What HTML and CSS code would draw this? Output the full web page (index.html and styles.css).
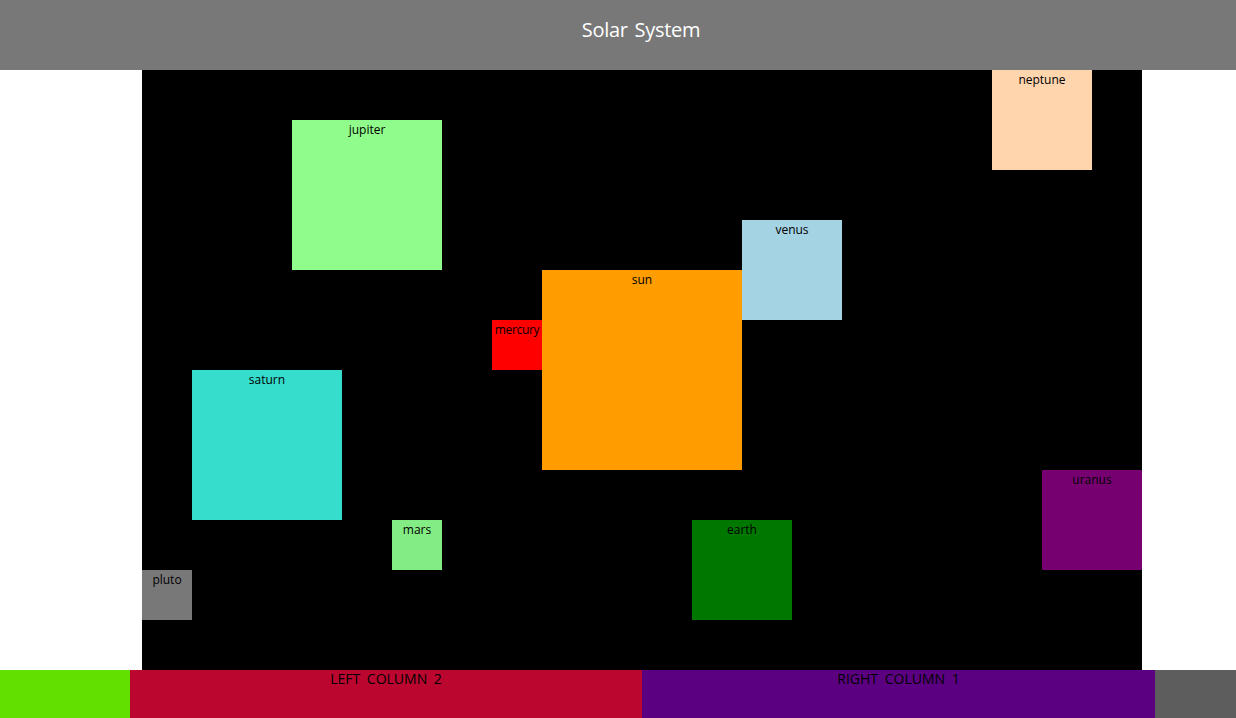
FILE: index.html
```html
<!DOCTYPE html>
<html>
<head>
<meta charset="utf-8">
<link rel="stylesheet" href="styles.css">
</head>
<body>
<header class="top">Solar System</header>
<main class="main">
  <div class="space">
    <div class="planet jupiter">jupiter</div>
    <div class="planet neptune">neptune</div>
    <div class="planet venus">venus</div>
    <div class="planet sun">sun</div>
    <div class="planet mercury">mercury</div>
    <div class="planet saturn">saturn</div>
    <div class="planet mars">mars</div>
    <div class="planet earth">earth</div>
    <div class="planet uranus">uranus</div>
    <div class="planet pluto">pluto</div>
  </div>
</main>
<footer class="bottom">
  <div class="col c1"></div>
  <div class="col c2">LEFT COLUMN 2</div>
  <div class="col c3">RIGHT COLUMN 1</div>
  <div class="col c4"></div>
</footer>
</body>
</html>
```
FILE: styles.css
```css
html, body {
  margin: 0;
  padding: 0;
  background: #ffffff;
  font-family: "Open Sans", "DejaVu Sans", sans-serif;
}
.top {
  height: 70px;
  background: #787878;
  color: #ffffff;
  text-align: center;
  font-size: 20px;
  line-height: 24px;
  word-spacing: 2px;
  letter-spacing: -0.3px;
  padding: 18px 0 0 46px;
  box-sizing: border-box;
}
.main {
  height: 600px;
  display: flex;
}
.space {
  position: relative;
  width: 1000px;
  height: 600px;
  margin-left: 142px;
  background: #000000;
}
.planet {
  position: absolute;
  text-align: center;
  font-size: 12px;
  line-height: 16px;
  padding-top: 2px;
  box-sizing: border-box;
  color: #000000;
  white-space: nowrap;
}
.jupiter { left: 150px; top: 50px; width: 150px; height: 150px; background: #90fc8c; }
.neptune { left: 850px; top: 0; width: 100px; height: 100px; background: #fed5ad; }
.venus { left: 600px; top: 150px; width: 100px; height: 100px; background: #a4d3e4; }
.sun { left: 400px; top: 200px; width: 200px; height: 200px; background: #ff9c00; }
.mercury { left: 350px; top: 250px; width: 50px; height: 50px; background: #ff0000; letter-spacing: -0.3px; }
.saturn { left: 50px; top: 300px; width: 150px; height: 150px; background: #36dccc; }
.mars { left: 250px; top: 450px; width: 50px; height: 50px; background: #84ec84; }
.earth { left: 550px; top: 450px; width: 100px; height: 100px; background: #007800; }
.uranus { left: 900px; top: 400px; width: 100px; height: 100px; background: #760070; }
.pluto { left: 0; top: 500px; width: 50px; height: 50px; background: #787878; }
.bottom {
  display: grid;
  grid-template-columns: 130px 512px 513px 1fr;
  height: 48px;
}
.col {
  text-align: center;
  font-size: 14px;
  line-height: 18px;
  padding-top: 0;
  word-spacing: 3px;
  color: #000000;
}
.c1 { background: #62e000; }
.c2 { background: #bb0730; }
.c3 { background: #5c0082; }
.c4 { background: #5d5d5d; }
```
